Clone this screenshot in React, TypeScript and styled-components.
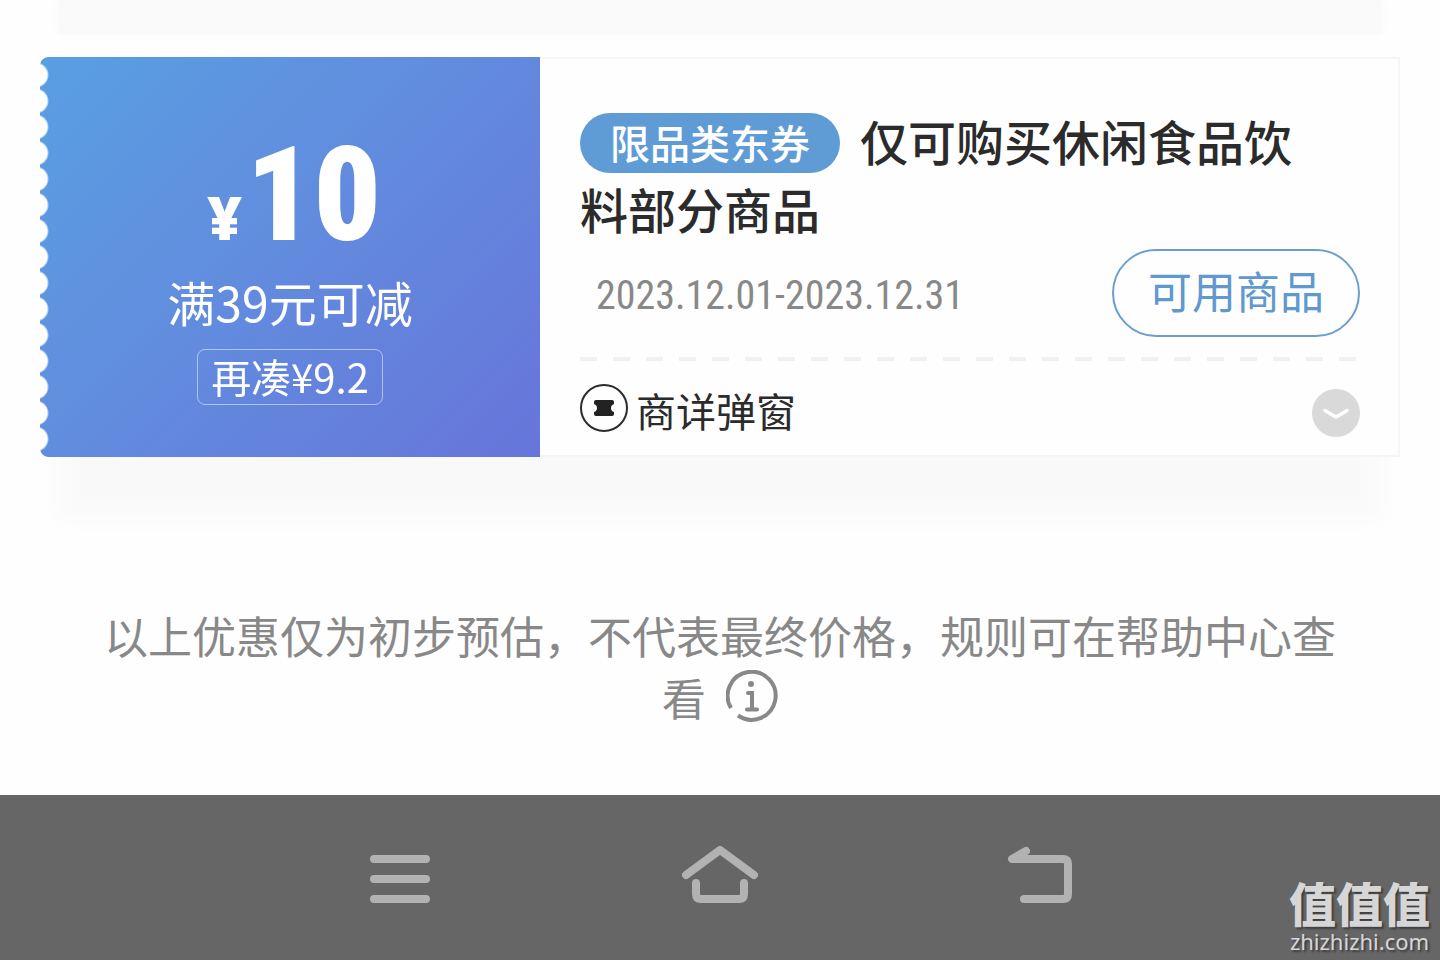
import React from 'react';
import styled, { createGlobalStyle } from 'styled-components';

const GlobalStyle = createGlobalStyle`
  * { box-sizing: border-box; }
  html, body { margin: 0; background: #fefefe; }
  body, button { font-family: "Noto Sans CJK SC", "Noto Sans", sans-serif; }
  button { padding: 0; border: 0; background: none; cursor: pointer; }
  svg { display: block; }
`;

const Page = styled.div`
  display: flex;
  flex-direction: column;
  min-height: 100vh;
`;

const Content = styled.main`
  flex: 1;
  padding: 0 40px;
`;

const PreviousShade = styled.div`
  height: 34px;
  margin: 0 18px 23px;
  background: #fafafa;
  box-shadow: 0 0 16px rgba(0, 0, 0, 0.02);
`;

const Coupon = styled.article`
  display: flex;
  min-height: 400px;
  box-shadow: 0 80px 20px -16px rgba(0, 0, 0, 0.02);
`;

const AmountBack = styled.div`
  display: flex;
  flex: none;
  background: #fefefe;
`;

const Amount = styled.section`
  width: 500px;
  flex: none;
  display: flex;
  flex-direction: column;
  align-items: center;
  padding: 70px 0 52px;
  border-radius: 8px 0 0 8px;
  color: #fff;
  background: linear-gradient(135deg, #589fe2 0%, #618fdf 40%, #6775da 100%);
  mask: radial-gradient(circle at -4px 13px, transparent 11px, #000 13px) 0 5px / 100% 26px repeat-y;
`;

const Price = styled.div`
  display: flex;
  align-items: baseline;
  gap: 4px;
  padding-left: 8px;
  font-family: "Roboto Condensed", Roboto, sans-serif;
  font-weight: 900;
  font-size: 132px;
  line-height: 136px;
`;

const Currency = styled.span`
  font-family: "Open Sans", sans-serif;
  font-size: 60px;
  font-weight: 800;
  line-height: 60px;
`;

const Condition = styled.div`
  margin-top: 2px;
  font-size: 48px;
  line-height: 72px;
`;

const Shortfall = styled.div`
  margin-top: 12px;
  padding: 0 13px 2px;
  border: 1px solid rgba(255, 255, 255, 0.5);
  border-radius: 8px;
  font-size: 40px;
  line-height: 52px;
`;

const Details = styled.section`
  flex: 1;
  display: flex;
  flex-direction: column;
  padding: 47px 38px 0 40px;
  border: 2px solid #f6f6f6;
  border-left: 0;
  background: #fefefe;
`;

const Title = styled.h2`
  margin: 0;
  padding-right: 40px;
  font-size: 48px;
  line-height: 68px;
  font-weight: 500;
  color: #2b2b2b;
`;

const Tag = styled.span`
  display: inline-block;
  margin: 7px 20px 0 0;
  padding: 0 30px 2px;
  border-radius: 30px;
  background: #5f9cd6;
  color: #fff;
  font-size: 40px;
  line-height: 58px;
  vertical-align: top;
`;

const ValidRow = styled.div`
  display: flex;
  align-items: center;
  justify-content: space-between;
  margin-top: 7px;
  padding-left: 16px;
`;

const Dates = styled.time`
  padding-top: 6px;
  font-family: "Roboto Condensed", Roboto, sans-serif;
  font-size: 40px;
  line-height: 48px;
  color: #888;
`;

const UseButton = styled.button`
  width: 248px;
  height: 88px;
  padding-bottom: 6px;
  border: 2px solid #6a9fcd;
  border-radius: 44px;
  color: #5f99cf;
  font-size: 44px;
  line-height: 60px;
`;

const Dashes = styled.hr`
  width: 100%;
  height: 4px;
  margin: 20px 0 0;
  border: 0;
  background: repeating-linear-gradient(to right, #f1f1f1 0 17px, transparent 17px 33px);
`;

const SourceRow = styled.div`
  flex: 1;
  display: flex;
  align-items: center;
  gap: 8px;
  color: #2b2b2b;
  font-size: 40px;
  line-height: 60px;
`;

const Source = styled.span`
  padding-top: 4px;
`;

const Expand = styled.button`
  margin-left: auto;
  padding-top: 10px;
`;

const Notice = styled.p`
  margin: 147px 60px 67px;
  text-align: center;
  font-size: 44px;
  line-height: 62px;
  color: #888;
`;

const InfoButton = styled.button`
  margin-left: 20px;
  vertical-align: -6px;
`;

const NavBar = styled.nav`
  position: relative;
  height: 165px;
  background: #666;
`;

const NavItems = styled.div`
  display: grid;
  grid-template-columns: repeat(3, 1fr);
  width: 66.667%;
  height: 100%;
  margin: 0 auto;
`;

const NavButton = styled.button`
  display: flex;
  align-items: center;
  justify-content: center;
`;

const Watermark = styled.div`
  position: absolute;
  right: 10px;
  bottom: 5px;
  display: flex;
  flex-direction: column;
  align-items: center;
  color: #d6d6d6;
  text-shadow: 2px 2px 2px rgba(0, 0, 0, 0.4);
`;

const WatermarkName = styled.strong`
  font-size: 47px;
  line-height: 50px;
  font-weight: 900;
`;

const WatermarkSite = styled.span`
  font-family: "Noto Sans", sans-serif;
  font-size: 22px;
  line-height: 28px;
`;

const NavIcon = ({ d }: { d: string }) => (
  <svg width="80" height="64" viewBox="0 0 80 64" fill="none" stroke="#b2b2b2" strokeWidth="8" strokeLinecap="round" strokeLinejoin="round" aria-hidden="true">
    <path d={d} />
  </svg>
);

const navItems = [
  { label: '最近任务', d: 'M14 13H66M14 33H66M14 53H66' },
  { label: '主屏幕', d: 'M6 29L40 4L74 29M16 37V48Q16 53 21 53H59Q64 53 64 48V37' },
  { label: '返回', d: 'M26 5L12 13H63Q68 13 68 18V48Q68 53 63 53H24' },
];

export default function App() {
  return (
    <Page>
      <GlobalStyle />
      <Content>
        <PreviousShade />
        <Coupon>
          <AmountBack>
            <Amount>
              <Price><Currency>¥</Currency>10</Price>
              <Condition>满39元可减</Condition>
              <Shortfall>再凑¥9.2</Shortfall>
            </Amount>
          </AmountBack>
          <Details>
            <Title><Tag>限品类东券</Tag>仅可购买休闲食品饮料部分商品</Title>
            <ValidRow>
              <Dates>2023.12.01-2023.12.31</Dates>
              <UseButton type="button">可用商品</UseButton>
            </ValidRow>
            <Dashes />
            <SourceRow>
              <svg width="48" height="48" viewBox="0 0 48 48" aria-hidden="true">
                <circle cx="24" cy="24" r="23" fill="none" stroke="#2b2b2b" strokeWidth="2" />
                <path d="M16 16H32Q34 16 34 18V20Q31 21 31 24T34 28V30Q34 32 32 32H16Q14 32 14 30V28Q17 27 17 24T14 20V18Q14 16 16 16Z" fill="#222" />
              </svg>
              <Source>商详弹窗</Source>
              <Expand type="button" aria-label="展开">
                <svg width="48" height="48" viewBox="0 0 48 48" aria-hidden="true">
                  <circle cx="24" cy="24" r="24" fill="#d9d9d9" />
                  <path d="M13 21.500L22 27Q24 28.500 26 27L35 21.500" fill="none" stroke="#fefefe" strokeWidth="3.500" strokeLinecap="round" />
                </svg>
              </Expand>
            </SourceRow>
          </Details>
        </Coupon>
        <Notice>
          以上优惠仅为初步预估，不代表最终价格，规则可在帮助中心查看
          <InfoButton type="button" aria-label="说明">
            <svg width="52" height="52" viewBox="0 0 52 52" fill="none" stroke="#888" strokeWidth="4" aria-hidden="true">
              <path d="M5 38A24 24 0 1 1 12 45.500" />
              <circle cx="25" cy="14" r="3" fill="#888" stroke="none" />
              <path d="M22 23H26V39M21 39.500H31" strokeLinecap="round" />
            </svg>
          </InfoButton>
        </Notice>
      </Content>
      <NavBar>
        <NavItems>
          {navItems.map((item) => (
            <NavButton key={item.label} type="button" aria-label={item.label}>
              <NavIcon d={item.d} />
            </NavButton>
          ))}
        </NavItems>
        <Watermark>
          <WatermarkName>值值值</WatermarkName>
          <WatermarkSite>zhizhizhi.com</WatermarkSite>
        </Watermark>
      </NavBar>
    </Page>
  );
}
